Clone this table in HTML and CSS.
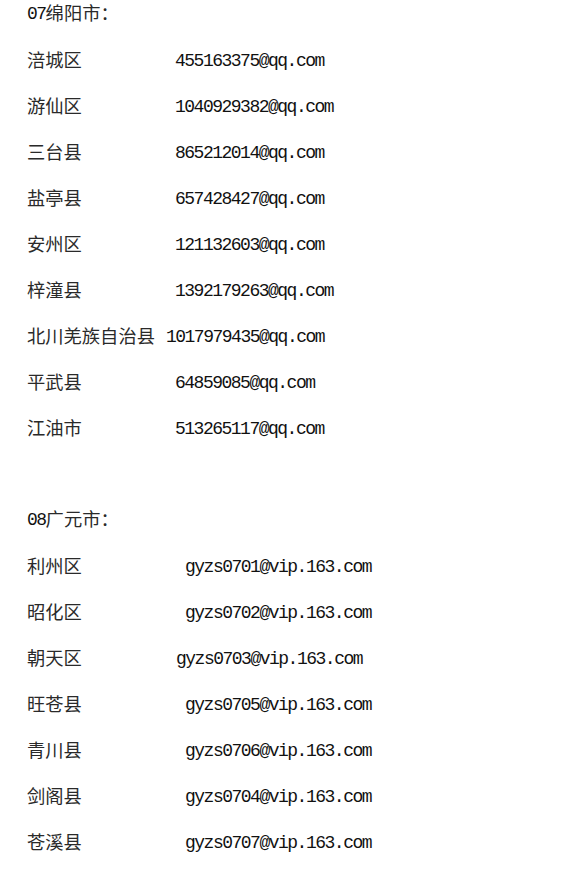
FILE: index.html
```html
<!DOCTYPE html>
<html lang="zh-CN">
<head>
    <meta charset="UTF-8">
    <meta name="viewport" content="width=device-width, initial-scale=1.0">
    <title>邮箱列表</title>
    <link rel="stylesheet" href="styles.css">
</head>
<body>
    <div class="page">
        <section class="group">
            <p class="city"><span class="num">07</span>绵阳市：</p>
            <p class="row"><span class="name">涪城区</span><span class="mail">455163375@qq.com</span></p>
            <p class="row"><span class="name">游仙区</span><span class="mail">1040929382@qq.com</span></p>
            <p class="row"><span class="name">三台县</span><span class="mail">865212014@qq.com</span></p>
            <p class="row"><span class="name">盐亭县</span><span class="mail">657428427@qq.com</span></p>
            <p class="row"><span class="name">安州区</span><span class="mail">121132603@qq.com</span></p>
            <p class="row"><span class="name">梓潼县</span><span class="mail">1392179263@qq.com</span></p>
            <p class="row"><span class="name name-auto">北川羌族自治县</span><span class="mail">1017979435@qq.com</span></p>
            <p class="row"><span class="name">平武县</span><span class="mail">64859085@qq.com</span></p>
            <p class="row"><span class="name">江油市</span><span class="mail">513265117@qq.com</span></p>
        </section>

        <section class="group group-wide">
            <p class="city"><span class="num">08</span>广元市：</p>
            <p class="row"><span class="name">利州区</span><span class="mail">gyzs0701@vip.163.com</span></p>
            <p class="row"><span class="name">昭化区</span><span class="mail">gyzs0702@vip.163.com</span></p>
            <p class="row"><span class="name name-short">朝天区</span><span class="mail">gyzs0703@vip.163.com</span></p>
            <p class="row"><span class="name">旺苍县</span><span class="mail">gyzs0705@vip.163.com</span></p>
            <p class="row"><span class="name">青川县</span><span class="mail">gyzs0706@vip.163.com</span></p>
            <p class="row"><span class="name">剑阁县</span><span class="mail">gyzs0704@vip.163.com</span></p>
            <p class="row"><span class="name">苍溪县</span><span class="mail">gyzs0707@vip.163.com</span></p>
        </section>
    </div>
</body>
</html>
```

FILE: styles.css
```css
body {
    margin: 0;
    background: #ffffff;
    color: #2a2a2a;
    font-family: "Noto Sans CJK SC", "Noto Sans", sans-serif;
    font-size: 18.3px;
}
.page {
    display: flex;
    flex-direction: column;
    gap: 65px;
    padding: 0 0 0 27px;
}
.group {
    display: flex;
    flex-direction: column;
    gap: 19px;
}
.city,
.row {
    margin: 0;
    height: 27px;
    line-height: 27px;
    display: flex;
    align-items: center;
    white-space: nowrap;
}
.city {
    margin-top: -1px;
    margin-bottom: 1px;
}
.num,
.mail {
    font-family: "Liberation Mono", "DejaVu Sans Mono", monospace;
    font-size: 18px;
    letter-spacing: -1.5px;
    color: #111;
    margin-top: 4px;
}
.num {
    margin-top: 3px;
}
.name {
    width: 148px;
    flex-shrink: 0;
    margin-top: -1px;
}
.name-auto {
    width: auto;
    margin-right: 11px;
}
.group-wide .name {
    width: 158px;
}
.group-wide .name-short {
    width: 149px;
}
```
